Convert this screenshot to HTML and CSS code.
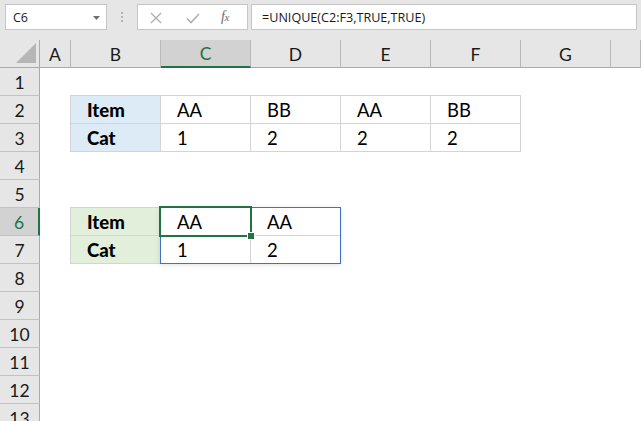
FILE: index.html
```html
<!DOCTYPE html>
<html>
<head>
<meta charset="utf-8">
<link rel="stylesheet" href="styles.css">
</head>
<body>
<div class="app">
  <div class="fbar">
    <div class="namebox">
      <span class="nb-text">C6</span>
      <svg class="nb-arrow" width="7" height="4" viewBox="0 0 7 4"><path d="M0 0H7L3.5 4Z" fill="#707070"/></svg>
    </div>
    <div class="grip"><i></i><i></i><i></i></div>
    <div class="fxbox">
      <svg class="ic-x" width="12" height="12" viewBox="0 0 12 12"><path d="M1 1L11 11M11 1L1 11" stroke="#B0B0B0" stroke-width="1.4" fill="none"/></svg>
      <svg class="ic-ok" width="14" height="11" viewBox="0 0 14 11"><path d="M1 5.5L5 9.5L13 1" stroke="#B0B0B0" stroke-width="1.6" fill="none"/></svg>
      <span class="fx">f<span class="fx-x">x</span></span>
    </div>
    <div class="formula">=UNIQUE(C2:F3,TRUE,TRUE)</div>
  </div>
  <div class="sheet">
    <div class="colhead">
      <div class="corner"><svg width="20" height="20" viewBox="0 0 20 20"><path d="M0 20H20V0Z" fill="#B6B6B6"/></svg></div>
      <div class="ch">A</div>
      <div class="ch">B</div>
      <div class="ch ch-sel">C</div>
      <div class="ch">D</div>
      <div class="ch">E</div>
      <div class="ch">F</div>
      <div class="ch">G</div>
      <div class="ch"></div>
    </div>
    <div class="body">
      <div class="rowhead">
        <div class="rh">1</div>
        <div class="rh">2</div>
        <div class="rh">3</div>
        <div class="rh">4</div>
        <div class="rh">5</div>
        <div class="rh rh-sel">6</div>
        <div class="rh">7</div>
        <div class="rh">8</div>
        <div class="rh">9</div>
        <div class="rh">10</div>
        <div class="rh">11</div>
        <div class="rh">12</div>
        <div class="rh">13</div>
      </div>
      <div class="cells">
        <div class="tbl t1">
          <div class="c lbl blue">Item</div>
          <div class="c">AA</div>
          <div class="c">BB</div>
          <div class="c">AA</div>
          <div class="c">BB</div>
          <div class="c lbl blue">Cat</div>
          <div class="c">1</div>
          <div class="c">2</div>
          <div class="c">2</div>
          <div class="c">2</div>
        </div>
        <div class="tbl t2">
          <div class="c lbl green">Item</div>
          <div class="c">AA</div>
          <div class="c">AA</div>
          <div class="c lbl green">Cat</div>
          <div class="c">1</div>
          <div class="c">2</div>
          <div class="spill"></div>
          <div class="sel"></div>
          <div class="handle"></div>
        </div>
      </div>
    </div>
  </div>
</div>
</body>
</html>
```
FILE: styles.css
```css
html, body {
  margin: 0;
  padding: 0;
  background: #fff;
}
.app {
  width: 641px;
  height: 421px;
  overflow: hidden;
  font-family: "Lato", "Liberation Sans", sans-serif;
  color: #1a1a1a;
}
.fbar {
  height: 40px;
  box-sizing: border-box;
  background: #E6E6E6;
  display: flex;
  align-items: flex-start;
  padding: 4px 4px 0 5px;
}
.namebox {
  width: 102px;
  height: 26px;
  box-sizing: border-box;
  background: #fff;
  border: 1px solid #C6C6C6;
  display: flex;
  align-items: center;
  justify-content: space-between;
  padding: 0 6px 0 7px;
  font-family: "Open Sans", "Liberation Sans", sans-serif;
  font-size: 12.5px;
  color: #222;
}
.nb-arrow { margin-top: 1px; }
.grip {
  width: 30px;
  height: 26px;
  display: flex;
  flex-direction: column;
  align-items: center;
  justify-content: center;
  gap: 2px;
}
.grip i {
  display: block;
  width: 2px;
  height: 2px;
  background: #B4B4B4;
}
.fxbox {
  width: 111px;
  height: 26px;
  box-sizing: border-box;
  background: #fff;
  border: 1px solid #C6C6C6;
  display: flex;
  align-items: center;
  padding-left: 12px;
}
.ic-x { margin-top: 1px; }
.ic-ok { margin-left: 24px; margin-top: 2px; }
.fx {
  margin-left: 21px;
  font-family: "Liberation Serif", serif;
  font-style: italic;
  font-size: 14px;
  color: #6A6A6A;
  letter-spacing: -0.5px;
}
.fx-x { font-size: 11px; }
.formula {
  flex: 1;
  margin-left: 3px;
  height: 26px;
  box-sizing: border-box;
  background: #fff;
  border: 1px solid #C6C6C6;
  padding-left: 10px;
  display: flex;
  align-items: center;
  font-family: "Open Sans", "Liberation Sans", sans-serif;
  font-size: 12.6px;
  color: #1a1a1a;
}
.sheet {
  background: #fff;
}
.colhead {
  display: grid;
  grid-template-columns: 40px 31px repeat(6, 90px) 1fr;
  height: 28px;
  background: #E6E6E6;
}
.colhead > div {
  box-sizing: border-box;
  border-right: 1px solid #B8B8B8;
  border-bottom: 1px solid #ABABAB;
  display: flex;
  align-items: center;
  justify-content: center;
  font-size: 17.5px;
  padding-top: 1px;
}
.colhead > .corner {
  border-right-color: #ABABAB;
  justify-content: flex-end;
  align-items: flex-end;
  padding: 0 3px 4px 0;
}
.corner svg { display: block; }
.ch-sel {
  background: #D2D2D2;
  color: #217346;
  border-bottom: 2px solid #217346 !important;
}
.body {
  display: flex;
}
.rowhead {
  width: 40px;
  flex: none;
  background: #E6E6E6;
}
.rh {
  height: 28px;
  box-sizing: border-box;
  border-right: 1px solid #ABABAB;
  border-bottom: 1px solid #C2C2C2;
  display: flex;
  align-items: center;
  justify-content: center;
  font-size: 17.5px;
  padding-top: 1px;
}
.rh-sel {
  background: #D2D2D2;
  color: #217346;
  border-right: 2px solid #217346;
}
.cells {
  flex: 1;
  display: grid;
  grid-template-columns: 31px repeat(6, 90px) 1fr;
  grid-template-rows: repeat(13, 28px);
}
.tbl {
  display: grid;
  grid-auto-rows: 27px;
  gap: 1px;
  padding: 1px;
  background: #D4D4D4;
  align-self: start;
  justify-self: start;
  margin: -1px 0 0 -1px;
  position: relative;
}
.t1 {
  grid-column: 2 / 7;
  grid-row: 2 / 4;
  grid-template-columns: repeat(5, 89px);
}
.t2 {
  grid-column: 2 / 5;
  grid-row: 6 / 8;
  grid-template-columns: repeat(3, 89px);
}
.c {
  background: #fff;
  padding-left: 16px;
  line-height: 28px;
  font-size: 18.5px;
  color: #000;
}
.lbl { font-weight: 900; }
.blue { background: #DDEBF7; }
.green { background: #E2EFDA; }
.spill {
  position: absolute;
  left: 90px;
  top: 0;
  width: 181px;
  height: 57px;
  box-sizing: border-box;
  border: 1px solid #3F72C6;
  box-shadow: 0 1px 5px rgba(0,0,0,0.12);
}
.sel {
  position: absolute;
  left: 89px;
  top: -1px;
  width: 93px;
  height: 31px;
  box-sizing: border-box;
  border: 2px solid #217346;
}
.handle {
  position: absolute;
  left: 178px;
  top: 26px;
  width: 6px;
  height: 6px;
  background: #217346;
  box-shadow: 0 0 0 1px #fff;
}
```
